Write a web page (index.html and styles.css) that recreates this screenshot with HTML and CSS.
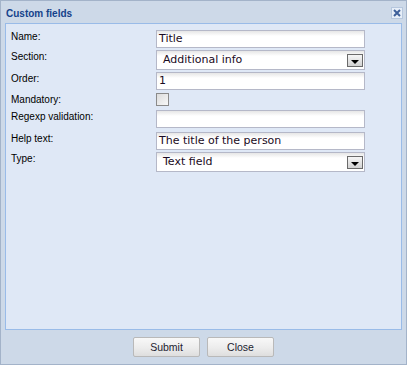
FILE: index.html
```html
<!DOCTYPE html>
<html lang="en">
<head>
    <meta charset="UTF-8">
    <title>Custom fields</title>
    <link rel="stylesheet" href="styles.css">
</head>
<body>
    <div class="window">
        <div class="window-header">
            <span class="window-title">Custom fields</span>
            <span class="tool-close">
                <svg width="10" height="10" viewBox="0 0 10 10">
                    <path d="M2 2 L8 8 M8 2 L2 8" stroke="#3d5f9a" stroke-width="2" fill="none"/>
                </svg>
            </span>
        </div>

        <div class="window-body">
            <div class="row">
                <div class="label">Name:</div>
                <div class="text-field">Title</div>
            </div>
            <div class="row">
                <div class="label">Section:</div>
                <div class="combo">
                    <span class="combo-text">Additional info</span>
                    <span class="trigger"><span class="arrow"></span></span>
                </div>
            </div>
            <div class="row row-wide">
                <div class="label">Order:</div>
                <div class="text-field">1</div>
            </div>
            <div class="row row-check">
                <div class="label">Mandatory:</div>
                <div class="checkbox"></div>
            </div>
            <div class="row row-loose">
                <div class="label">Regexp validation:</div>
                <div class="text-field"></div>
            </div>
            <div class="row">
                <div class="label">Help text:</div>
                <div class="text-field">The title of the person</div>
            </div>
            <div class="row">
                <div class="label">Type:</div>
                <div class="combo">
                    <span class="combo-text">Text field</span>
                    <span class="trigger"><span class="arrow"></span></span>
                </div>
            </div>
        </div>

        <div class="window-footer">
            <button class="btn">Submit</button>
            <button class="btn">Close</button>
        </div>
    </div>
</body>
</html>
```

FILE: styles.css
```css
body {
    margin: 0;
    padding: 0;
    font-family: "Liberation Sans", Arial, sans-serif;
    font-size: 10px;
    color: #000;
}

.window {
    width: 407px;
    height: 365px;
    box-sizing: border-box;
    border: 1px solid #a3b3c9;
    background: #cdd9e8;
    display: flex;
    flex-direction: column;
}

.window-header {
    height: 22px;
    display: flex;
    align-items: center;
    justify-content: space-between;
    padding: 0 3px 0 5px;
}

.window-title {
    font-weight: bold;
    font-size: 10px;
    color: #15428b;
    margin-top: 2px;
}

.tool-close {
    width: 10px;
    height: 10px;
    border: 1px solid #b6c7de;
    background: #e6eef8;
    display: flex;
    align-items: center;
    justify-content: center;
    margin-top: 2px;
}

.window-body {
    flex: 1;
    margin: 0 4px;
    border: 1px solid #99bbe8;
    background: #dfe8f6;
    padding: 6px 5px;
}

.row {
    display: flex;
    align-items: flex-start;
    margin-bottom: 2px;
}

.row-wide {
    margin-bottom: 3px;
}

.row-check {
    margin-bottom: 3px;
}

.row-loose {
    margin-bottom: 4px;
}

.label {
    width: 145px;
    line-height: 14px;
    color: #000;
}

.text-field,
.combo {
    width: 209px;
    box-sizing: border-box;
    border: 1px solid #b5b8c8;
    background: linear-gradient(#e6e6e6 0, #ffffff 5px, #ffffff 100%);
    font-family: "DejaVu Sans", Verdana, sans-serif;
    font-size: 11px;
    color: #1a0a22;
}

.text-field {
    height: 18px;
    line-height: 16px;
    padding-left: 2px;
}

.combo {
    height: 20px;
    display: flex;
    align-items: center;
    justify-content: space-between;
    padding: 0 1px 0 6px;
}

.combo-text {
    line-height: 18px;
}

.trigger {
    width: 16px;
    height: 13px;
    box-sizing: border-box;
    border: 1px solid #6a6a6a;
    background: linear-gradient(#f6f6f6, #d2d2d2);
    display: flex;
    align-items: flex-end;
    justify-content: center;
    padding-bottom: 2px;
}

.arrow {
    width: 0;
    height: 0;
    border-left: 4px solid transparent;
    border-right: 4px solid transparent;
    border-top: 4px solid #000;
}

.checkbox {
    width: 13px;
    height: 13px;
    box-sizing: border-box;
    border: 1px solid #8a8a8a;
    background: linear-gradient(135deg, #dcdcdc, #f8f8f8);
}

.window-footer {
    height: 34px;
    display: flex;
    justify-content: center;
    align-items: flex-start;
    gap: 7px;
    padding-top: 7px;
    box-sizing: border-box;
}

.btn {
    width: 67px;
    height: 20px;
    border: 1px solid #b9b9b9;
    border-radius: 2px;
    background: linear-gradient(#f8f8f8 0%, #ececec 55%, #dedede 100%);
    font-family: "Liberation Sans", Arial, sans-serif;
    font-size: 10.5px;
    color: #1c1c30;
    padding: 0;
}
```
